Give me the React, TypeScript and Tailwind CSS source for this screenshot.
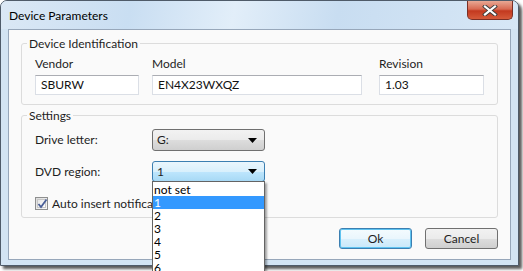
import React from "react";

const font = "font-['Lato','Noto_Sans',sans-serif]";

function TextBox({ value, width }: { value: string; width: string }) {
  return (
    <div
      className={`${width} h-[20px] bg-white border border-[#dbdfe6] border-t-[#abadb3] pl-[5px] text-[12px] leading-[18px] text-[#111]`}
    >
      {value}
    </div>
  );
}

function Arrow() {
  return (
    <svg width="9" height="5" viewBox="0 0 9 5" className="block">
      <path d="M0 0H9L4.5 5Z" fill="#000" />
    </svg>
  );
}

function Checkbox() {
  return (
    <div className="w-[13px] h-[13px] border border-[#8e8f8f] bg-[linear-gradient(135deg,#dcdcdc,#fbfbfb)] p-[1px]">
      <div className="w-full h-full border border-[#c7c7c7] bg-[linear-gradient(135deg,#e6e6e6,#ffffff)] relative">
        <svg width="11" height="11" viewBox="0 0 11 11" className="absolute left-[-1px] top-[-2px]">
          <path d="M1.5 6 L4 9 L9.5 1.5" fill="none" stroke="#4a5f97" strokeWidth="1.8" />
        </svg>
      </div>
    </div>
  );
}

export default function App() {
  const items = ["not set", "1", "2", "3", "4", "5", "6"];
  return (
    <div className={`w-[523px] h-[271px] bg-white overflow-hidden ${font} text-[12px] text-[#1e1e1e]`}>
      <div className="w-[519px] h-[266px] rounded-t-[7px] border border-[#4f5b69] bg-[#d3e4f3] shadow-[3px_3px_3px_rgba(0,0,0,0.65)] flex flex-col">
        {/* title bar */}
        <div className="h-[28px] flex items-start justify-between rounded-t-[6px] bg-[linear-gradient(100deg,#dbe8f5_0%,#c9def2_25%,#e2eef9_45%,#c8ddf1_65%,#d7e7f6_100%)]">
          <div className="pl-[8px] pt-[6px] text-[12px] leading-[18px] text-black">Device Parameters</div>
          <div className="mr-[5px] w-[46px] h-[19px] rounded-b-[5px] border border-t-0 border-[#7a2f25] bg-[linear-gradient(180deg,#e9a894_0%,#d86a52_45%,#c3391f_55%,#d55a3a_100%)] flex items-center justify-center">
            <svg width="16" height="11" viewBox="0 0 16 11">
              <path d="M3 1.5 L13 9.5 M13 1.5 L3 9.5" stroke="#3b3b3b" strokeWidth="4" strokeLinecap="square" />
              <path d="M3 1.5 L13 9.5 M13 1.5 L3 9.5" stroke="#fff" strokeWidth="2.2" strokeLinecap="square" />
            </svg>
          </div>
        </div>

        {/* client area */}
        <div className="mx-[7px] h-[231px] border border-[#97a7ba] bg-[#fafafa] flex flex-col px-[12px]">
          <fieldset className="mt-[6px] border border-[#dcdcdc] rounded-[3px] pl-[13px] pb-[9px]">
            <legend className="ml-[-8px] px-[2px] leading-[15px]">Device Identification</legend>
            <div className="mt-[5px] flex">
              <div className="flex flex-col gap-[4px]">
                <span className="leading-[15px]">Vendor</span>
                <TextBox value="SBURW" width="w-[104px]" />
              </div>
              <div className="ml-[13px] flex flex-col gap-[4px]">
                <span className="leading-[15px]">Model</span>
                <TextBox value="EN4X23WXQZ" width="w-[210px]" />
              </div>
              <div className="ml-[17px] flex flex-col gap-[4px]">
                <span className="leading-[15px]">Revision</span>
                <TextBox value="1.03" width="w-[105px]" />
              </div>
            </div>
          </fieldset>

          <fieldset className="mt-[3px] border border-[#dcdcdc] rounded-[3px] pl-[13px] pb-[6px]">
            <legend className="ml-[-8px] px-[2px] leading-[15px]">Settings</legend>
            <div className="mt-[6px] flex items-center">
              <span className="w-[117px]">Drive letter:</span>
              <div className="w-[113px] h-[22px] rounded-[3px] border border-[#707070] bg-[linear-gradient(180deg,#f2f2f2_0%,#ebebeb_50%,#dddddd_51%,#cfcfcf_100%)] flex items-center justify-between pl-[4px] pr-[7px]">
                <span>G:</span>
                <Arrow />
              </div>
            </div>
            <div className="mt-[10px] flex items-center">
              <span className="w-[117px]">DVD region:</span>
              <div className="relative">
                <div className="w-[113px] h-[21px] rounded-[3px] border border-[#3c7fb1] bg-[linear-gradient(180deg,#eaf6fd_0%,#d9f0fc_50%,#bee6fd_51%,#a7d9f5_100%)] flex items-center justify-between pl-[4px] pr-[7px]">
                  <span>1</span>
                  <Arrow />
                </div>
                <div className="absolute left-0 top-[20px] w-[113px] h-[100px] bg-white border border-[#646464] shadow-[2px_2px_2px_rgba(0,0,0,0.35)] pt-[1px] z-10">
                  {items.map((it) => (
                    <div
                      key={it}
                      className={`h-[13px] leading-[13px] pl-[1px] ${it === "1" ? "bg-[#3399ff] text-white" : "text-black"}`}
                    >
                      {it}
                    </div>
                  ))}
                </div>
              </div>
            </div>
            <div className="mt-[14px] flex items-center gap-[4px]">
              <Checkbox />
              <span className="leading-[15px]">Auto insert notification</span>
            </div>
          </fieldset>

          <div className="mt-[10px] flex justify-end gap-[13px]">
            <div className="w-[73px] h-[21px] rounded-[3px] border border-[#3c7fb1] shadow-[0_0_0_1px_#5fc3f0_inset] bg-[linear-gradient(180deg,#f4fbfe_0%,#eaf6fd_50%,#d9f0fc_51%,#c9e8f9_100%)] flex items-center justify-center">
              Ok
            </div>
            <div className="w-[73px] h-[21px] rounded-[3px] border border-[#707070] bg-[linear-gradient(180deg,#f2f2f2_0%,#ebebeb_50%,#dddddd_51%,#cfcfcf_100%)] flex items-center justify-center">
              Cancel
            </div>
          </div>
        </div>
      </div>
    </div>
  );
}
